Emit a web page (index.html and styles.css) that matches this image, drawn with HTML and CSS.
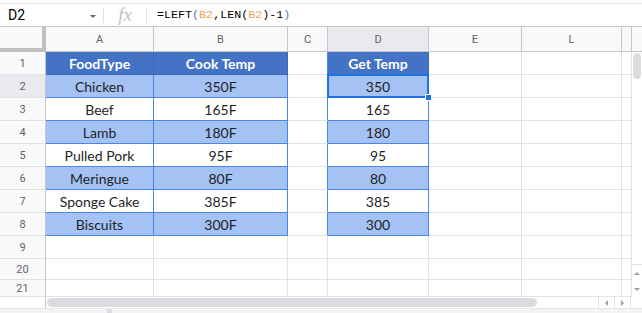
FILE: index.html
```html
<!DOCTYPE html>
<html lang="en">
<head>
    <meta charset="UTF-8">
    <title>Get Temp - Sheet</title>
    <link rel="stylesheet" href="styles.css">
</head>
<body>
    <div class="app">
        <div class="top-gap"></div>
        <div class="formula-bar">
            <div class="name-box">D2</div>
            <div class="name-arrow"></div>
            <div class="fb-sep"></div>
            <div class="fx">fx</div>
            <div class="fb-sep"></div>
            <div class="formula">=LEFT<span class="paren">(</span><span class="ref">B2</span>,LEN(<span class="ref">B2</span>)-1<span class="paren">)</span></div>
        </div>

        <div class="sheet">
            <div class="grid">
                <div class="row head-row">
                    <div class="corner"></div>
                    <div class="ch">A</div>
                    <div class="ch">B</div>
                    <div class="ch">C</div>
                    <div class="ch sel-h">D</div>
                    <div class="ch">E</div>
                    <div class="ch">L</div>
                    <div class="ch"></div>
                </div>
                <div class="row">
                    <div class="rh">1</div>
                    <div class="cell hd tb">FoodType</div>
                    <div class="cell hd tb">Cook Temp</div>
                    <div class="cell tb-r"></div>
                    <div class="cell hd tb">Get Temp</div>
                    <div class="cell"></div>
                    <div class="cell"></div>
                    <div class="cell"></div>
                </div>
                <div class="row">
                    <div class="rh sel-h">2</div>
                    <div class="cell lt tb">Chicken</div>
                    <div class="cell lt tb">350F</div>
                    <div class="cell tb-r"></div>
                    <div class="cell lt tb active">350<span class="handle"></span></div>
                    <div class="cell"></div>
                    <div class="cell"></div>
                    <div class="cell"></div>
                </div>
                <div class="row">
                    <div class="rh">3</div>
                    <div class="cell tb">Beef</div>
                    <div class="cell tb">165F</div>
                    <div class="cell tb-r"></div>
                    <div class="cell tb">165</div>
                    <div class="cell"></div>
                    <div class="cell"></div>
                    <div class="cell"></div>
                </div>
                <div class="row">
                    <div class="rh">4</div>
                    <div class="cell lt tb">Lamb</div>
                    <div class="cell lt tb">180F</div>
                    <div class="cell tb-r"></div>
                    <div class="cell lt tb">180</div>
                    <div class="cell"></div>
                    <div class="cell"></div>
                    <div class="cell"></div>
                </div>
                <div class="row">
                    <div class="rh">5</div>
                    <div class="cell tb">Pulled Pork</div>
                    <div class="cell tb">95F</div>
                    <div class="cell tb-r"></div>
                    <div class="cell tb">95</div>
                    <div class="cell"></div>
                    <div class="cell"></div>
                    <div class="cell"></div>
                </div>
                <div class="row">
                    <div class="rh">6</div>
                    <div class="cell lt tb">Meringue</div>
                    <div class="cell lt tb">80F</div>
                    <div class="cell tb-r"></div>
                    <div class="cell lt tb">80</div>
                    <div class="cell"></div>
                    <div class="cell"></div>
                    <div class="cell"></div>
                </div>
                <div class="row">
                    <div class="rh">7</div>
                    <div class="cell tb">Sponge Cake</div>
                    <div class="cell tb">385F</div>
                    <div class="cell tb-r"></div>
                    <div class="cell tb">385</div>
                    <div class="cell"></div>
                    <div class="cell"></div>
                    <div class="cell"></div>
                </div>
                <div class="row">
                    <div class="rh">8</div>
                    <div class="cell lt tb">Biscuits</div>
                    <div class="cell lt tb">300F</div>
                    <div class="cell tb-r"></div>
                    <div class="cell lt tb">300</div>
                    <div class="cell"></div>
                    <div class="cell"></div>
                    <div class="cell"></div>
                </div>
                <div class="row">
                    <div class="rh">9</div>
                    <div class="cell"></div>
                    <div class="cell"></div>
                    <div class="cell"></div>
                    <div class="cell"></div>
                    <div class="cell"></div>
                    <div class="cell"></div>
                    <div class="cell"></div>
                </div>
                <div class="row row-20">
                    <div class="rh">20</div>
                    <div class="cell"></div>
                    <div class="cell"></div>
                    <div class="cell"></div>
                    <div class="cell"></div>
                    <div class="cell"></div>
                    <div class="cell"></div>
                    <div class="cell"></div>
                </div>
                <div class="row row-21">
                    <div class="rh">21</div>
                    <div class="cell"></div>
                    <div class="cell"></div>
                    <div class="cell"></div>
                    <div class="cell"></div>
                    <div class="cell"></div>
                    <div class="cell"></div>
                    <div class="cell"></div>
                </div>
            </div>

            <div class="vscroll">
                <div class="vs-head"></div>
                <div class="vs-track"><div class="vs-thumb"></div></div>
                <div class="vs-btn"><span class="tri-up"></span></div>
                <div class="vs-btn"><span class="tri-down"></span></div>
            </div>
        </div>

        <div class="hscroll">
            <div class="hs-lead"></div>
            <div class="hs-track"><div class="hs-thumb"></div></div>
            <div class="hs-btn"><span class="tri-left"></span></div>
            <div class="hs-btn"><span class="tri-right"></span></div>
            <div class="hs-corner"></div>
        </div>
        <div class="tab-strip"><div class="tab-grip"></div></div>
    </div>
</body>
</html>
```

FILE: styles.css
```css
body {
    margin: 0;
    background: #fff;
    font-family: Lato, "Open Sans", sans-serif;
}
.app {
    width: 642px;
    height: 313px;
    overflow: hidden;
}
.top-gap {
    height: 3px;
    border-bottom: 1px solid #e3e3e3;
}

/* formula bar */
.formula-bar {
    height: 23px;
    box-sizing: border-box;
    border-bottom: 1px solid #c7c7c7;
    display: flex;
    align-items: center;
}
.name-box {
    width: 82px;
    padding-left: 8px;
    font-family: Roboto, sans-serif;
    font-size: 14px;
    color: #000;
}
.name-arrow {
    width: 0;
    height: 0;
    border-left: 3px solid transparent;
    border-right: 3px solid transparent;
    border-top: 3px solid #666;
    margin: 2px 7px 0 0;
}
.fb-sep {
    width: 1px;
    height: 15px;
    background: #e0e0e0;
}
.fx {
    width: 42px;
    text-align: center;
    font-family: "Liberation Serif", serif;
    font-style: italic;
    font-size: 19px;
    color: #c4c4c4;
    line-height: 20px;
}
.formula {
    padding-left: 10px;
    font-family: "Liberation Mono", monospace;
    font-size: 11.7px;
    color: #000;
}
.ref {
    color: #f0a35b;
}
.paren {
    color: #4a7bbf;
}

/* grid */
.sheet {
    display: flex;
}
.grid {
    width: 632px;
}
.row {
    display: grid;
    grid-template-columns: 46px 108px 134px 40px 101px 93px 100px 10px;
    height: 23px;
}
.head-row {
    height: 25px;
}
.row-20 {
    height: 21px;
}
.row-21 {
    height: 17px;
}
.corner {
    background: #f8f9fa;
    border-right: 4px solid #c0c0c0;
    border-bottom: 4px solid #c0c0c0;
}
.corner, .ch, .rh, .cell {
    box-sizing: border-box;
}
.ch {
    background: #f8f9fa;
    border-right: 1px solid #c7c7c7;
    border-bottom: 1px solid #c7c7c7;
    font-family: Roboto, sans-serif;
    font-size: 11px;
    color: #5f6368;
    display: flex;
    align-items: center;
    justify-content: center;
}
.rh {
    background: #f8f9fa;
    border-right: 1px solid #c7c7c7;
    border-bottom: 1px solid #e2e2e2;
    font-family: Roboto, sans-serif;
    font-size: 11px;
    color: #5f6368;
    display: flex;
    align-items: center;
    justify-content: center;
}
.sel-h {
    background: #e8eaed;
}
.cell {
    border-right: 1px solid #e2e2e2;
    border-bottom: 1px solid #e2e2e2;
    display: flex;
    align-items: center;
    justify-content: center;
    font-size: 14px;
    color: #1f1f1f;
}
.tb {
    border-right-color: #4a86e8;
    border-bottom-color: #4a86e8;
}
.tb-r {
    border-right-color: #4a86e8;
}
.hd {
    background: #4472c4;
    color: #fff;
    font-weight: bold;
    border-right-color: #3d68b4;
    border-bottom-color: #3d68b4;
}
.lt {
    background: #a4c2f4;
}
.active {
    position: relative;
}
.active::after {
    content: "";
    position: absolute;
    top: -1px;
    left: -1px;
    right: -1px;
    bottom: -1px;
    border: 2px solid #1a73e8;
}
.handle {
    position: absolute;
    right: -4px;
    bottom: -4px;
    width: 5px;
    height: 5px;
    background: #1a73e8;
    border: 1px solid #fff;
    z-index: 1;
}

/* vertical scrollbar */
.vscroll {
    width: 10px;
    display: flex;
    flex-direction: column;
}
.vs-head {
    height: 25px;
    box-sizing: border-box;
    background: #f8f9fa;
    border-bottom: 1px solid #c7c7c7;
}
.vs-track {
    flex: 1;
    padding: 1px 1px 0 1px;
    border-bottom: 1px solid #e2e2e2;
}
.vs-thumb {
    height: 26px;
    background: #dadce0;
    border-radius: 4px;
}
.vs-btn {
    height: 16px;
    display: flex;
    align-items: center;
    justify-content: center;
}
.tri-up, .tri-down, .tri-left, .tri-right {
    width: 0;
    height: 0;
}
.tri-up {
    border-left: 3px solid transparent;
    border-right: 3px solid transparent;
    border-bottom: 3px solid #9aa0a6;
}
.tri-down {
    border-left: 3px solid transparent;
    border-right: 3px solid transparent;
    border-top: 3px solid #9aa0a6;
}
.tri-left {
    border-top: 3px solid transparent;
    border-bottom: 3px solid transparent;
    border-right: 3px solid #9aa0a6;
}
.tri-right {
    border-top: 3px solid transparent;
    border-bottom: 3px solid transparent;
    border-left: 3px solid #9aa0a6;
}

/* horizontal scrollbar */
.hscroll {
    height: 11px;
    display: flex;
}
.hs-lead {
    width: 46px;
    box-sizing: border-box;
    border-right: 1px solid #c7c7c7;
}
.hs-track {
    width: 553px;
    padding: 1px 0 1px 1px;
    box-sizing: border-box;
    border-right: 1px solid #e2e2e2;
}
.hs-thumb {
    width: 490px;
    height: 9px;
    background: #dadce0;
    border-radius: 5px;
}
.hs-btn {
    width: 16px;
    box-sizing: border-box;
    border-right: 1px solid #e2e2e2;
    display: flex;
    align-items: center;
    justify-content: center;
}
.hs-corner {
    width: 11px;
}
.tab-strip {
    height: 5px;
    background: #f1f3f4;
    border-top: 1px solid #e8e8e8;
}
.tab-grip {
    margin-left: 107px;
    width: 5px;
    height: 5px;
    background: #dadce0;
}
```
